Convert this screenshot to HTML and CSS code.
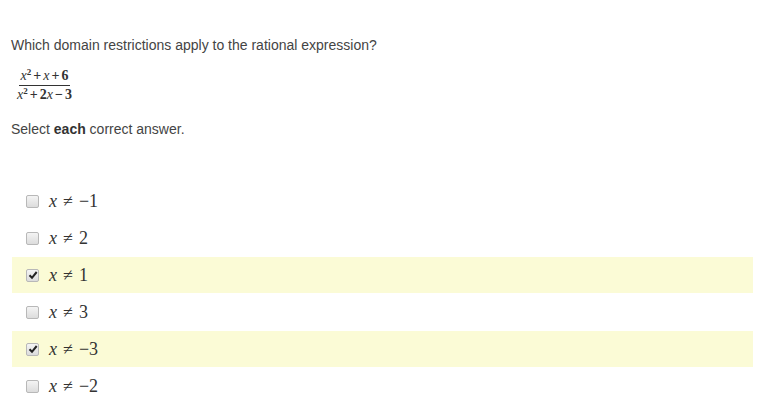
FILE: index.html
```html
<!DOCTYPE html>
<html>
<head>
<meta charset="utf-8">
<link rel="stylesheet" href="styles.css">
</head>
<body>
<div class="page">
  <p class="question">Which domain restrictions apply to the rational expression?</p>
  <div class="frac">
    <span class="num"><i>x</i><sup>2</sup><span class="op">+</span><i>x</i><span class="op">+</span>6</span>
    <span class="den"><i>x</i><sup>2</sup><span class="op">+</span>2<i>x</i><span class="op">−</span>3</span>
  </div>
  <p class="instr">Select <b>each</b> correct answer.</p>
  <ul class="options">
    <li class="opt"><span class="box"></span><span class="math"><i>x</i><span class="rel">≠</span>−1</span></li>
    <li class="opt"><span class="box"></span><span class="math"><i>x</i><span class="rel">≠</span>2</span></li>
    <li class="opt sel"><span class="box checked"><svg viewBox="0 0 10 10" width="10" height="10"><path d="M1.5 5.2 L4 7.8 L8.7 2" fill="none" stroke="#222" stroke-width="2"/></svg></span><span class="math"><i>x</i><span class="rel">≠</span>1</span></li>
    <li class="opt"><span class="box"></span><span class="math"><i>x</i><span class="rel">≠</span>3</span></li>
    <li class="opt sel"><span class="box checked"><svg viewBox="0 0 10 10" width="10" height="10"><path d="M1.5 5.2 L4 7.8 L8.7 2" fill="none" stroke="#222" stroke-width="2"/></svg></span><span class="math"><i>x</i><span class="rel">≠</span>−3</span></li>
    <li class="opt"><span class="box"></span><span class="math"><i>x</i><span class="rel">≠</span>−2</span></li>
  </ul>
</div>
</body>
</html>
```
FILE: styles.css
```css
html, body { margin: 0; padding: 0; background: #fff; }
.page {
  font-family: "Liberation Sans", Arial, sans-serif;
  color: #444;
  font-size: 14px;
  padding: 37px 20px 0 11px;
}
.question { margin: 0; line-height: 16px; }
.frac {
  display: inline-flex;
  flex-direction: column;
  align-items: center;
  margin-top: 15px;
  margin-left: 4px;
  font-family: "Liberation Serif", "Times New Roman", serif;
  font-size: 14px;
  font-weight: bold;
  color: #333;
}
.frac .num, .frac .den { line-height: 16px; padding: 0 2px; white-space: nowrap; }
.frac .num { border-bottom: 1px solid #333; padding-bottom: 1px; }
.frac .den { padding-top: 1px; }
.frac i { font-style: italic; font-weight: normal; }
.frac sup { font-size: 9px; line-height: 0; vertical-align: 5px; }
.frac .op { margin: 0 2px; }
.instr { margin: 18px 0 0; line-height: 16px; }
.instr b { color: #333; }
.options { list-style: none; margin: 46px 0 0 1px; padding: 0; width: 741px; }
.opt {
  height: 36px;
  margin-bottom: 1px;
  display: flex;
  align-items: center;
  padding-left: 14px;
}
.opt.sel { background: #fbfbd6; }
.box {
  width: 11px; height: 11px;
  border: 1px solid #b8b8b8;
  border-radius: 2px;
  background: linear-gradient(#f4f4f4, #dcdcdc);
  display: flex; align-items: center; justify-content: center;
}
.math {
  margin-left: 10px;
  font-family: "Liberation Serif", "Times New Roman", serif;
  font-size: 18px;
  color: #333;
}
.math .rel { margin: 0 6px; }
```
